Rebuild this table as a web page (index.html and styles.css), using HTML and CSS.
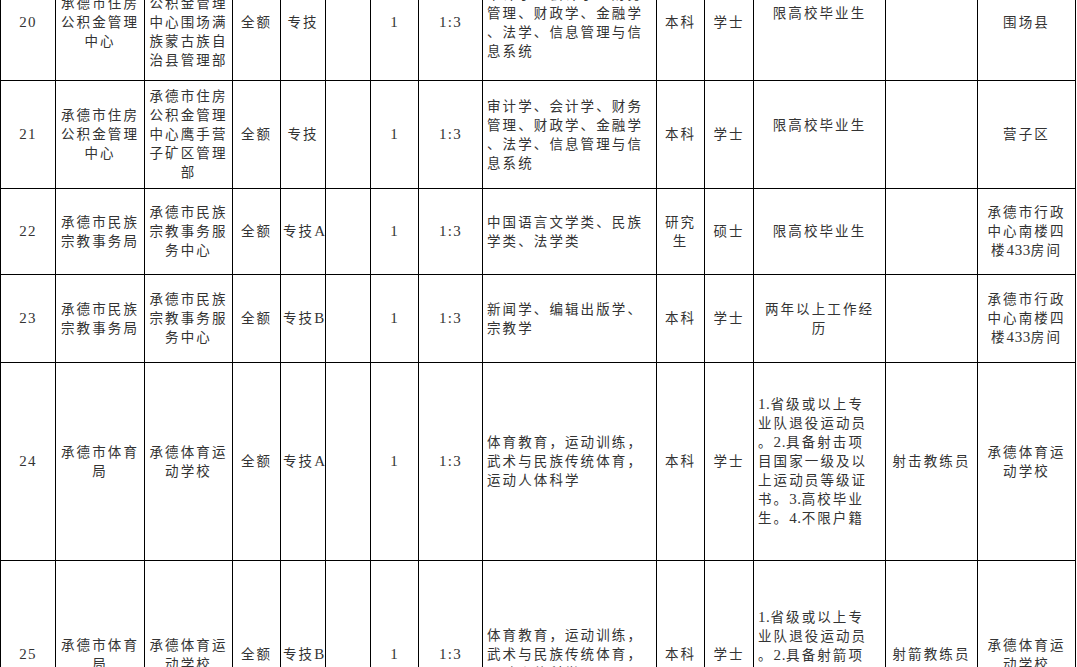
FILE: index.html
```html
<!DOCTYPE html>
<html lang="zh-CN">
<head>
<meta charset="utf-8">
<title>岗位信息表</title>
<link rel="stylesheet" href="styles.css">
</head>
<body>
<table class="sheet">
  <colgroup>
    <col class="c1"><col class="c2"><col class="c3"><col class="c4"><col class="c5"><col class="c6"><col class="c7">
    <col class="c8"><col class="c9"><col class="c10"><col class="c11"><col class="c12"><col class="c13"><col class="c14">
  </colgroup>
  <tbody>
    <tr class="r20">
      <td class="n">20</td>
      <td>承德市住房<br>公积金管理<br>中心</td>
      <td>承德市住房<br>公积金管理<br>中心围场满<br>族蒙古族自<br>治县管理部</td>
      <td>全额</td>
      <td>专技</td>
      <td></td>
      <td class="n">1</td>
      <td class="n">1:3</td>
      <td class="l">审计学、会计学、财务<br>管理、财政学、金融学<br>、法学、信息管理与信<br>息系统</td>
      <td>本科</td>
      <td>学士</td>
      <td class="up">限高校毕业生</td>
      <td></td>
      <td>围场县</td>
    </tr>
    <tr class="r21">
      <td class="n">21</td>
      <td>承德市住房<br>公积金管理<br>中心</td>
      <td>承德市住房<br>公积金管理<br>中心鹰手营<br>子矿区管理<br>部</td>
      <td>全额</td>
      <td>专技</td>
      <td></td>
      <td class="n">1</td>
      <td class="n">1:3</td>
      <td class="l">审计学、会计学、财务<br>管理、财政学、金融学<br>、法学、信息管理与信<br>息系统</td>
      <td>本科</td>
      <td>学士</td>
      <td class="up">限高校毕业生</td>
      <td></td>
      <td>营子区</td>
    </tr>
    <tr class="r22">
      <td class="n">22</td>
      <td>承德市民族<br>宗教事务局</td>
      <td>承德市民族<br>宗教事务服<br>务中心</td>
      <td>全额</td>
      <td>专技<span class="lat">A</span></td>
      <td></td>
      <td class="n">1</td>
      <td class="n">1:3</td>
      <td class="l">中国语言文学类、民族<br>学类、法学类</td>
      <td>研究<br>生</td>
      <td>硕士</td>
      <td>限高校毕业生</td>
      <td></td>
      <td>承德市行政<br>中心南楼四<br>楼<span class="lat">433</span>房间</td>
    </tr>
    <tr class="r23">
      <td class="n">23</td>
      <td>承德市民族<br>宗教事务局</td>
      <td>承德市民族<br>宗教事务服<br>务中心</td>
      <td>全额</td>
      <td>专技<span class="lat">B</span></td>
      <td></td>
      <td class="n">1</td>
      <td class="n">1:3</td>
      <td class="l">新闻学、编辑出版学、<br>宗教学</td>
      <td>本科</td>
      <td>学士</td>
      <td>两年以上工作经<br>历</td>
      <td></td>
      <td>承德市行政<br>中心南楼四<br>楼<span class="lat">433</span>房间</td>
    </tr>
    <tr class="r24">
      <td class="n">24</td>
      <td>承德市体育<br>局</td>
      <td>承德体育运<br>动学校</td>
      <td>全额</td>
      <td>专技<span class="lat">A</span></td>
      <td></td>
      <td class="n">1</td>
      <td class="n">1:3</td>
      <td class="l">体育教育，运动训练，<br>武术与民族传统体育，<br>运动人体科学</td>
      <td>本科</td>
      <td>学士</td>
      <td class="l"><span class="lat">1.</span>省级或以上专<br>业队退役运动员<br>。<span class="lat">2.</span>具备射击项<br>目国家一级及以<br>上运动员等级证<br>书。<span class="lat">3.</span>高校毕业<br>生。<span class="lat">4.</span>不限户籍</td>
      <td>射击教练员</td>
      <td>承德体育运<br>动学校</td>
    </tr>
    <tr class="r25">
      <td class="n">25</td>
      <td>承德市体育<br>局</td>
      <td>承德体育运<br>动学校</td>
      <td>全额</td>
      <td>专技<span class="lat">B</span></td>
      <td></td>
      <td class="n">1</td>
      <td class="n">1:3</td>
      <td class="l">体育教育，运动训练，<br>武术与民族传统体育，<br>运动人体科学</td>
      <td>本科</td>
      <td>学士</td>
      <td class="l down"><span class="lat">1.</span>省级或以上专<br>业队退役运动员<br>。<span class="lat">2.</span>具备射箭项<br>目国家一级及以<br>上运动员等级证<br>书。<span class="lat">3.</span>高校毕业<br>生。<span class="lat">4.</span>不限户籍</td>
      <td>射箭教练员</td>
      <td>承德体育运<br>动学校</td>
    </tr>
  </tbody>
</table>
</body>
</html>
```
FILE: styles.css
```css
html, body {
  margin: 0;
  padding: 0;
  background: #ffffff;
  overflow: hidden;
}

.sheet {
  border-collapse: collapse;
  table-layout: fixed;
  width: 1076px;
  margin-top: -36px;
  font-family: "Liberation Serif", "Noto Sans CJK SC", serif;
  font-size: 13.5px;
  letter-spacing: 2.1px;
  line-height: 19px;
  color: #333333;
}

.c1 { width: 55px; }
.c2 { width: 89px; }
.c3 { width: 88px; }
.c4 { width: 48px; }
.c5 { width: 45px; }
.c6 { width: 45px; }
.c7 { width: 48px; }
.c8 { width: 64px; }
.c9 { width: 174px; }
.c10 { width: 48px; }
.c11 { width: 49px; }
.c12 { width: 132px; }
.c13 { width: 92px; }
.c14 { width: 98px; }

.sheet td {
  border: 1px solid #000000;
  padding: 0 2px;
  text-align: center;
  vertical-align: middle;
  white-space: nowrap;
  overflow: hidden;
}

.sheet td.l {
  text-align: left;
  padding-left: 4px;
}

.sheet td.n {
  font-size: 15px;
  letter-spacing: 1.2px;
}

.lat {
  font-size: 15px;
  letter-spacing: 0.6px;
}

.sheet td.up {
  padding-bottom: 19px;
}

.sheet td.down {
  padding-top: 39px;
}

.r20 { height: 116px; }
.r21 { height: 108px; }
.r22 { height: 86px; }
.r23 { height: 88px; }
.r24 { height: 198px; }
.r25 { height: 188px; }
```
